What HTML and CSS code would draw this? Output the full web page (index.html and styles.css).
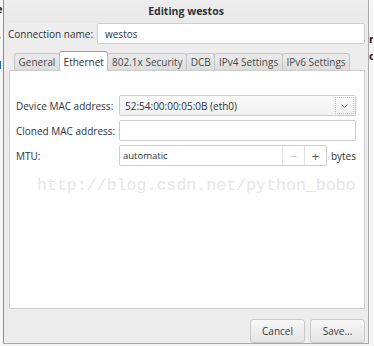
FILE: index.html
```html
<!DOCTYPE html>
<html>
<head>
<meta charset="utf-8">
<link rel="stylesheet" href="styles.css">
</head>
<body>
<div class="screen">
  <div class="bg-strip bg-left">
    <span class="frag f1">e</span>
    <span class="frag f2">-</span>
    <span class="frag f3">r</span>
    <span class="frag f4">I</span>
  </div>
  <div class="dialog">
    <div class="titlebar">Editing westos</div>
    <div class="conn-row">
      <span class="label">Connection name:</span>
      <div class="entry">westos</div>
    </div>
    <div class="notebook">
      <div class="tabs">
        <div class="tab">General</div>
        <div class="tab active">Ethernet</div>
        <div class="tab">802.1x Security</div>
        <div class="tab">DCB</div>
        <div class="tab">IPv4 Settings</div>
        <div class="tab">IPv6 Settings</div>
      </div>
      <div class="panel">
        <div class="form">
          <span class="flabel">Device MAC address:</span>
          <div class="combo"><span class="combo-text">52:54:00:00:05:0B (eth0)</span><span class="combo-btn"><svg width="9" height="6" viewBox="0 0 9 6"><path d="M1.5 1.5 L4.5 4.5 L7.5 1.5" fill="none" stroke="#8a8a8a" stroke-width="1"/></svg></span></div>
          <span class="flabel">Cloned MAC address:</span>
          <div class="field"></div>
          <span class="flabel">MTU:</span>
          <div class="mtu">
            <div class="spin"><span class="spin-text">automatic</span><span class="spin-btn minus">−</span><span class="spin-btn plus">+</span></div>
            <span class="unit">bytes</span>
          </div>
        </div>
        <div class="watermark">http://blog.csdn.net/python_bobo</div>
      </div>
    </div>
    <div class="buttons">
      <div class="btn">Cancel</div>
      <div class="btn">Save...</div>
    </div>
  </div>
  <div class="bg-strip bg-right">
    <span class="frag r1">r</span>
    <span class="frag r2">c</span>
  </div>
</div>
</body>
</html>
```
FILE: styles.css
```css
html, body { margin: 0; padding: 0; }
body { background: #f4f4f4; font-family: "Open Sans", "DejaVu Sans", sans-serif; font-size: 10px; color: #2e3436; }
.screen { display: flex; width: 374px; height: 346px; overflow: hidden; }
.bg-strip { position: relative; overflow: hidden; background: #f6f6f6; font-weight: bold; font-size: 11px; color: #222; }
.bg-left { width: 3px; }
.bg-right { width: 4px; }
.frag { position: absolute; line-height: 1; }
.f1 { left: -4px; top: 3px; }
.f2 { left: -3px; top: 30px; }
.f3 { left: -5px; top: 45px; }
.f4 { left: -2px; top: 59px; }
.r1 { left: 0; top: 33px; }
.r2 { left: 0; top: 50px; }

.dialog {
  width: 364px; height: 344px;
  margin-top: -2px;
  background: #ededed;
  border: 1px solid #a8a8a8;
  border-left-color: #8e8e8e;
  box-shadow: -1px 0 0 #b8b8b8, 1px 0 0 #b8b8b8;
  border-radius: 4px 4px 0 0;
  display: flex; flex-direction: column;
}
.titlebar { height: 25px; display: flex; align-items: center; justify-content: center; font-weight: bold; font-size: 10.5px; color: #2e3436; background: linear-gradient(#eeeeee, #e9e9e9); }
.conn-row { display: flex; align-items: center; padding: 0 3px 0 4px; height: 21px; }
.label { width: 89px; color: #2e3436; }
.entry { flex: 1; background: #fff; border: 1px solid #cfcfcf; border-radius: 2px; display: flex; align-items: center; padding-left: 7px; box-sizing: border-box; height: 21px; }

.notebook { margin: 7px 3px 0 5px; display: flex; flex-direction: column; }
.tabs { display: flex; align-items: flex-end; padding-left: 5px; height: 19px; }
.tab { height: 17px; box-sizing: border-box; padding: 0 3.6px; display: flex; align-items: center; background: linear-gradient(#ececec, #dcdcdc); border: 1px solid #c4c4c4; border-bottom: none; border-radius: 3px 3px 0 0; color: #4a4a4a; margin-right: -1px; }
.tab.active { background: #fff; border-color: #a9c4e2; border-top: 1px solid #7fa6d4; position: relative; z-index: 1; margin-bottom: -1px; height: 20px; color: #2e3436; }
.panel { height: 239px; background: #fff; border: 1px solid #cbcbcb; box-sizing: border-box; padding: 24px 8px 0 6px; }
.form { display: grid; grid-template-columns: 103px 1fr; row-gap: 4px; align-items: center; }
.flabel { color: #2e3436; }
.combo, .field, .spin { height: 21px; box-sizing: border-box; border: 1px solid #cdcdcd; border-radius: 2px; background: #fafafa; }
.combo { display: flex; align-items: center; background: linear-gradient(#fbfbfb, #f1f1f1); }
.combo-text { flex: 1; padding-left: 5px; }
.combo-btn { width: 19px; height: 17px; margin-right: 1px; display: flex; align-items: center; justify-content: center; border: 1px dotted #c8c8c8; box-sizing: border-box; }
.field { background: #fff; }
.mtu { display: flex; align-items: center; gap: 4px; }
.spin { flex: 1; display: flex; align-items: center; background: #fff; }
.spin-text { flex: 1; padding-left: 3px; font-size: 9.5px; }
.spin-btn { width: 21px; height: 19px; display: flex; align-items: center; justify-content: center; border-left: 1px solid #e2e2e2; font-size: 13px; color: #555; }
.spin-btn.minus { color: #c8c8c8; }
.unit { color: #2e3436; }
.watermark { margin-top: 10px; margin-left: 21px; font-family: "Liberation Mono", monospace; font-size: 16.6px; color: #e6e6e6; white-space: nowrap; }

.buttons { display: flex; justify-content: flex-end; gap: 5px; padding: 10px 3px 0 0; }
.btn { width: 55px; height: 24px; box-sizing: border-box; border: 1px solid #c9c9c9; border-radius: 3px; background: linear-gradient(#f7f7f7, #e4e4e4); display: flex; align-items: center; justify-content: center; color: #3c3c3c; }
```
